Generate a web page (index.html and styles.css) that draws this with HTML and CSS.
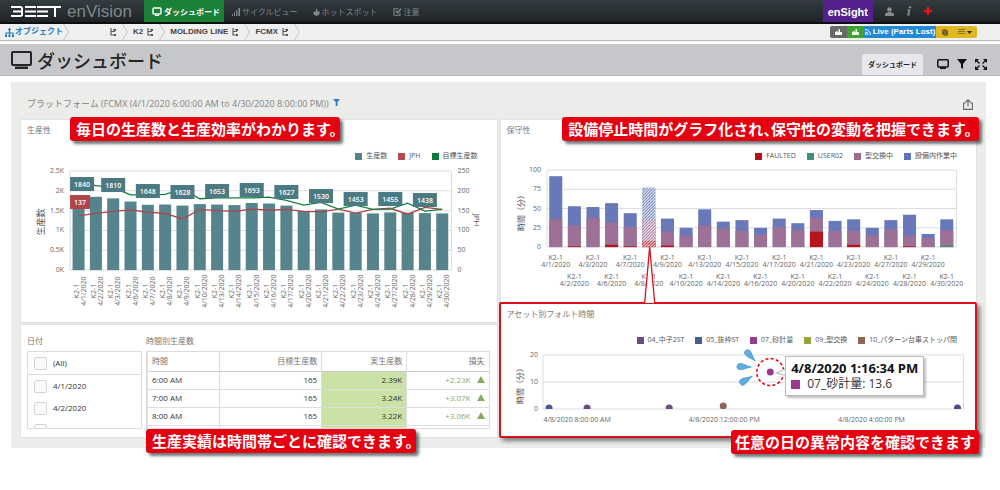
FILE: index.html
```html
<!DOCTYPE html>
<html lang="ja">
<head>
<meta charset="utf-8">
<title>ダッシュボード - enVision</title>
<link rel="stylesheet" href="styles.css">
</head>
<body>
<header class="topbar">
  <svg class="logo" width="50" height="11" viewBox="0 0 50 11" role="img" aria-label="BEET" fill="#fff">
    <path d="M0 0H10L12 1.5V9.5L10 11H0V9H10V6.5H2V4.5H10V2H0ZM14 0H25V2H14ZM14 4.5H25V6.5H14ZM14 9H25V11H14ZM26 0H37V2H26ZM26 4.5H37V6.5H26ZM26 9H37V11H26ZM37 0H50V2H45V11H43V2H37Z"/>
  </svg>
  <span class="product">enVision</span>
  <nav class="nav">
    <a class="nav-item active" href="#">
      <svg width="10" height="9" viewBox="0 0 10 9"><rect x="1" y="1" width="8" height="6" rx="1" fill="none" stroke="#fff" stroke-width="1.4"/><path d="M3 8h4v1H3z" fill="#fff"/></svg>ダッシュボード</a>
    <a class="nav-item" href="#">
      <svg width="8" height="8" viewBox="0 0 8 8" fill="currentColor"><path d="M0 6h1v2H0zM2 4h1v4H2zM4 2h1.3v6H4zM6.3 0H8v8H6.300z"/></svg>サイクルビュー</a>
    <a class="nav-item" href="#">
      <svg width="7" height="8" viewBox="0 0 7 8" fill="currentColor"><path d="M3 0C5 2 4 3 5 3.500C6 3 6 3 6.200 2.800C7 5 7 7 3.500 8C0 7 0 5 .8 3.500L2 4C3 3 3 2 3 0Z"/></svg>ホットスポット</a>
    <a class="nav-item" href="#">
      <svg width="9" height="8" viewBox="0 0 9 8" fill="none" stroke="currentColor"><path d="M5.500 .7H1v6.600h6V4.500" stroke-width="1.100"/><path d="M3 3l1.500 1.800L8 .7" stroke-width="1.400"/></svg>注意</a>
  </nav>
  <div class="top-tools">
    <a class="ensight" href="#">enSight</a>
    <button class="icon-btn" aria-label="ユーザー"><svg width="9" height="9" viewBox="0 0 9 9" fill="#868a8c"><circle cx="4.500" cy="2.500" r="2.300"/><path d="M0 9V7.500C0 6 2 5.500 3.500 5H5.500C7 5.500 9 6 9 7.500V9Z"/></svg></button>
    <button class="icon-btn" aria-label="情報"><svg width="6" height="10" viewBox="0 0 6 10" fill="#868a8c"><circle cx="4" cy="1.200" r="1.200"/><path d="M1 3.500H4.500L3.200 8.500H4.200V9.500H1L2.300 4.500H1Z"/></svg></button>
    <button class="icon-btn" aria-label="追加"><svg width="8" height="8" viewBox="0 0 8 8" fill="#e8141e"><path d="M2.800 0H5.200V2.800H8V5.200H5.200V8H2.800V5.200H0V2.800H2.800Z"/></svg></button>
  </div>
</header>

<svg class="defs" width="0" height="0" aria-hidden="true">
  <symbol id="tree" viewBox="0 0 6 9"><path d="M1 0V7H5.500M1 3.500H5M3 1.500H5" fill="none" stroke="#555" stroke-width="1.100"/><path d="M4 1h2v2H4zM4 6h2v2H4z" fill="#555"/></symbol>
  <symbol id="chev" viewBox="0 0 6 16"><path d="M.5 0L5.500 8L.5 16" fill="none" stroke="#c6c6c6"/></symbol>
  <symbol id="org" viewBox="0 0 9 9"><path d="M4.500 0V8M1 8V5H8V8M3 1.500H6" fill="none" stroke="#1c7ec2" stroke-width="1.200"/><path d="M0 7h2v2H0zM3.500 7h2v2h-2zM7 7h2v2H7z" fill="#1c7ec2"/></symbol>
  <symbol id="bars" viewBox="0 0 7 6"><path d="M0 3h7v3H0zM1 2h1.500v2H1zM3.500 0H5v4H3.500z" fill="#f2f2f2"/></symbol>
</svg>

<div class="crumbs">
  <nav class="path">
    <a class="crumb root" href="#"><svg width="9" height="9"><use href="#org"/></svg>オブジェクト</a>
    <svg class="chev" width="6" height="16"><use href="#chev"/></svg>
    <a class="crumb blank" href="#" aria-label="工場"><svg width="6" height="9"><use href="#tree"/></svg></a>
    <svg class="chev" width="6" height="16"><use href="#chev"/></svg>
    <a class="crumb" href="#">K2 <svg width="6" height="9"><use href="#tree"/></svg></a>
    <svg class="chev" width="6" height="16"><use href="#chev"/></svg>
    <a class="crumb" href="#">MOLDING LINE <svg width="6" height="9"><use href="#tree"/></svg></a>
    <svg class="chev" width="6" height="16"><use href="#chev"/></svg>
    <a class="crumb" href="#">FCMX <svg width="6" height="9"><use href="#tree"/></svg></a>
    <svg class="chev" width="6" height="16"><use href="#chev"/></svg>
  </nav>
  <div class="btn-group">
    <button class="b-gray" aria-label="グラフ"><svg width="7" height="6"><use href="#bars"/></svg></button>
    <button class="b-green" aria-label="稼働グラフ"><svg width="7" height="6"><use href="#bars"/></svg></button>
    <button class="b-blue"><svg width="6" height="6" viewBox="0 0 6 6" fill="none" stroke="#fff"><path d="M0 .5A5.500 5.500 0 0 1 5.500 6M0 3A3 3 0 0 1 3 6"/><circle cx=".8" cy="5.200" r=".5"/></svg>Live (Parts Lost)</button>
    <button class="b-yellow" aria-label="記録"><svg width="6" height="7" viewBox="0 0 6 7"><path d="M0 1L3 0L6 2V6L3 7L0 5Z" fill="#6c5a16"/><path d="M1 2L3 3V6" fill="none" stroke="#c9a52a" stroke-width=".6"/></svg></button>
    <button class="b-yellow wide" aria-label="一覧"><svg width="14" height="6" viewBox="0 0 14 6"><path d="M0 .5h7M0 2.500h7M0 4.500h7" stroke="#8d7415"/><path d="M9 2h5L11.500 5z" fill="#222"/></svg></button>
  </div>
</div>

<div class="titlebar">
  <svg width="21" height="18" viewBox="0 0 21 18"><rect x="1" y="1" width="19" height="13" rx="1" fill="none" stroke="#252525" stroke-width="2"/><path d="M4 15.500h13v2.500H4z" fill="#252525"/></svg>
  <h1>ダッシュボード</h1>
  <a class="tab" href="#">ダッシュボード</a>
  <div class="view-tools">
    <button class="icon-btn" aria-label="画面"><svg width="12" height="10" viewBox="0 0 12 10"><rect x=".8" y=".8" width="10.400" height="7.200" rx="1" fill="none" stroke="#111" stroke-width="1.500"/><path d="M3 8.500h6V10H3z" fill="#111"/></svg></button>
    <button class="icon-btn" aria-label="フィルター"><svg width="10" height="10" viewBox="0 0 10 10"><path d="M0 0H10L6 5V10L4 8.500V5Z" fill="#111"/></svg></button>
    <button class="icon-btn" aria-label="全画面"><svg width="12" height="11" viewBox="0 0 12 11"><path d="M0 0H4L0 4ZM12 0V4L8 0ZM0 11V7L4 11ZM12 11H8L12 7Z" fill="#111"/><path d="M1 1L4.500 4.500M11 1L7.500 4.500M1 10L4.500 6.500M11 10L7.500 6.500" stroke="#111" stroke-width="1.400"/></svg></button>
  </div>
</div>

<main class="board">
  <div class="board-head">
    <h2>プラットフォーム (FCMX (4/1/2020 6:00:00 AM to 4/30/2020 8:00:00 PM))</h2>
    <svg class="funnel" width="7" height="7" viewBox="0 0 7 7"><path d="M0 0H7L4.500 3V7H2.700V3Z" fill="#3079d0"/></svg>
    <button class="icon-btn share" aria-label="共有"><svg width="10" height="11" viewBox="0 0 10 11" fill="none" stroke="#666" stroke-width="1.100"><path d="M3 4H.6V10.400H9.400V4H7M5 7.500V1M2.800 3L5 .8L7.200 3"/></svg></button>
  </div>

  <div class="columns">
    <div class="col">
      <section class="card">
        <h3>生産性</h3>
        <ul class="legend">
          <li><i class="sw teal"></i>生産数</li>
          <li><i class="sw rose"></i>JPH</li>
          <li><i class="sw green"></i>目標生産数</li>
        </ul>
        <svg class="chart" id="output-chart" viewBox="0 0 475 160"></svg>
        <p class="callout c-output">毎日の生産数と生産効率がわかります。</p>
      </section>

      <section class="card hourly">
        <div class="dates">
          <h3>日付</h3>
          <div class="datelist">
            <label class="all"><input type="checkbox">(All)</label>
            <label><input type="checkbox">4/1/2020</label>
            <label><input type="checkbox">4/2/2020</label>
            <label><input type="checkbox">4/3/2020</label>
          </div>
        </div>
        <div class="hours">
          <h3>時間別生産数</h3>
          <div class="tablebox">
            <table>
              <thead><tr><th>時間</th><th>目標生産数</th><th>実生産数</th><th>損失</th></tr></thead>
              <tbody>
                <tr><td>6:00 AM</td><td>165</td><td>2.39K</td><td>+2.23K<i class="up"></i></td></tr>
                <tr><td>7:00 AM</td><td>165</td><td>3.24K</td><td>+3.07K<i class="up"></i></td></tr>
                <tr><td>8:00 AM</td><td>165</td><td>3.22K</td><td>+3.06K<i class="up"></i></td></tr>
                <tr><td></td><td></td><td></td><td></td></tr>
              </tbody>
            </table>
          </div>
        </div>
        <p class="callout c-hourly">生産実績は時間帯ごとに確認できます。</p>
      </section>
    </div>

    <div class="col right">
      <section class="card">
        <h3>保守性</h3>
        <ul class="legend">
          <li><i class="sw red"></i>FAULTED</li>
          <li><i class="sw mint"></i>USER02</li>
          <li><i class="sw mauve"></i>型交換中</li>
          <li><i class="sw blue"></i>設備内作業中</li>
        </ul>
        <svg class="chart" id="downtime-chart" viewBox="0 0 475 140"></svg>
        <p class="callout c-downtime">設備停止時間がグラフ化され、保守性の変動を把握できます。</p>
      </section>

      <section class="card fault">
        <svg class="pointer" viewBox="0 0 474 58"><path d="M143.500 57L148.500 1L153.500 57" fill="#fff" stroke="#d7101c" stroke-width="1.300"/></svg>
        <h3>アセット別フォルト時間</h3>
        <ul class="legend">
          <li><i class="sw plum"></i>04_中子2ST</li>
          <li><i class="sw navy"></i>05_抜枠ST</li>
          <li><i class="sw purple"></i>07_砂計量</li>
          <li><i class="sw olive"></i>09_型交換</li>
          <li><i class="sw brown"></i>10_パターン台車ストッパ閉</li>
        </ul>
        <svg class="chart" id="fault-chart" viewBox="0 0 474 90"></svg>
        <div class="tip"><b>4/8/2020 1:16:34 PM</b><span><i class="sw purple"></i>07_砂計量: 13.6</span></div>
        <p class="callout c-fault">任意の日の異常内容を確認できます</p>
      </section>
    </div>
  </div>
</main>
<script src="charts.js"></script>
</body>
</html>
```
FILE: styles.css
```css
* { box-sizing: border-box; }
html { min-height: 100%; background: #fff; }
body {
  margin: 0;
  min-height: 100vh;
  background: #fff;
  color: #555;
  font: 8px/12px "Open Sans", "Noto Sans CJK JP", sans-serif;
}
h1, h2, h3, p, ul { margin: 0; padding: 0; }
a { color: inherit; text-decoration: none; }
button { font: inherit; border: 0; padding: 0; cursor: pointer; }
svg { display: block; flex: none; }
.defs { position: absolute; }
.icon-btn { background: none; display: flex; align-items: center; }

/* top bar */
.topbar {
  display: flex;
  align-items: center;
  height: 24px;
  padding-left: 11px;
  background: linear-gradient(#343d41, #1e2326);
  border-bottom: 2px solid #0c0e0f;
}
.product {
  margin-left: 6px;
  padding-top: 2px;
  width: 77px;
  font: 17px/22px "Liberation Sans", sans-serif;
  color: #7d868b;
}
.nav { display: flex; align-self: stretch; }
.nav-item {
  display: flex;
  align-items: center;
  gap: 2px;
  padding: 1px 7px 0 8px;
  color: #7e878b;
  font: 8px/12px "Noto Sans CJK JP", sans-serif;
}
.nav-item.active { background: #1b8038; color: #fff; font-weight: 700; padding: 1px 4px 0 8px; }
.top-tools {
  display: flex;
  align-items: center;
  align-self: stretch;
  gap: 12px;
  margin-left: auto;
  padding-right: 68px;
}
.ensight {
  align-self: stretch;
  padding: 0 5px;
  background: #54208b;
  color: #fff;
  font: bold 11px/24px "Liberation Sans", sans-serif;
}

/* breadcrumbs */
.crumbs {
  display: flex;
  align-items: center;
  justify-content: space-between;
  height: 16px;
  padding-right: 23px;
  background: #efefef;
  box-shadow: 0 1px 1px #bbb;
}
.path { display: flex; align-items: center; padding-left: 5px; }
.crumb {
  display: flex;
  align-items: center;
  gap: 4px;
  padding: 0 6px 0 5px;
  color: #444;
  font: bold 8px/16px "Liberation Sans", "Noto Sans CJK JP", sans-serif;
}
.crumb.root { padding: 0; gap: 1px; color: #1c7ec2; }
.crumb.blank { padding-left: 41px; }
.btn-group {
  display: flex;
  height: 12px;
  border-radius: 2px;
  overflow: hidden;
}
.btn-group button {
  display: flex;
  align-items: center;
  justify-content: center;
  gap: 2px;
  width: 17px;
  font: bold 8px/12px "Liberation Sans", sans-serif;
  color: #fff;
}
.btn-group .b-gray { background: #67696b; }
.btn-group .b-green { background: #3fa32f; }
.btn-group .b-blue { background: #2489d3; width: 72px; white-space: nowrap; }
.btn-group .b-yellow { background: #dfb721; }
.btn-group .wide { width: 24px; }

/* title strip */
.titlebar {
  display: flex;
  align-items: center;
  gap: 5px;
  height: 32px;
  margin-top: 4px;
  padding: 0 13px 0 11px;
  background: #c6c7cb;
  border-bottom: 1px solid #b9b9c0;
}
h1 {
  font: 500 18px/30px "Noto Sans CJK JP", sans-serif;
  color: #252525;
}
.tab {
  align-self: flex-end;
  margin-left: auto;
  padding: 0 6px;
  background: #e7e7ed;
  border-radius: 2px 2px 0 0;
  color: #222;
  font: bold 7px/21px "Noto Sans CJK JP", sans-serif;
}
.view-tools { display: flex; gap: 8px; padding: 9px 0 0 9px; }

/* dashboard */
.board {
  margin: 6px 14px 0 11px;
  padding: 0 10px 10px;
  background: #ececea;
}
.board-head { display: flex; align-items: center; height: 38px; padding: 6px 3px 0 6px; }
h2 { font-size: 9px; line-height: 16px; font-weight: 400; color: #858585; }
.funnel { margin: 0 0 4px 4px; }
.share { margin-left: auto; }
.columns { display: grid; grid-template-columns: 1fr 1fr; gap: 4px; }
.col { display: flex; flex-direction: column; gap: 3px; min-width: 0; }
.col.right { gap: 0; }
.card {
  position: relative;
  padding-top: 4px;
  background: #fff;
  box-shadow: 0 0 2px #ccc;
}
h3 { padding-left: 6px; font-size: 8px; line-height: 12px; font-weight: 400; color: #777; }
.legend {
  display: flex;
  justify-content: flex-end;
  gap: 11px;
  margin-top: 14px;
  padding-right: 19px;
  list-style: none;
  font-size: 7px;
  line-height: 12px;
  color: #555;
  white-space: nowrap;
}
.legend li { display: flex; align-items: center; gap: 4px; }
.sw { display: block; width: 7px; height: 7px; }
.teal { background: #55848c; }
.rose { background: #b24a50; }
.green { background: #0d7a3c; }
.red { background: #b5121b; }
.mint { background: #3f9271; }
.mauve { background: #9c6b93; }
.blue { background: #6073b8; }
.plum { background: #6c4c80; }
.navy { background: #485c91; }
.purple { background: #983c8e; }
.olive { background: #97a53c; }
.brown { background: #8d6550; }

.chart { width: 100%; height: auto; font-size: 7px; fill: #666; }
.chart .axis { font-size: 8px; fill: #555; }
.chart .axis.big { font-size: 9px; }
.chart .grid { stroke: #dedede; fill: none; }
.chart .badge { fill: #fff; font-weight: 600; }

/* hourly output */
.hourly { display: flex; gap: 4px; height: 112px; padding: 10px 7px 0 6px; }
.hourly h3 { padding-left: 0; }
.dates { flex: 0 0 115px; }
.hours { flex: 1; min-width: 0; }
.datelist { margin-top: 4px; height: 78px; overflow: hidden; border: 1px solid #ddd; }
.datelist label {
  display: flex;
  align-items: center;
  gap: 6px;
  height: 22px;
  padding-left: 6px;
  color: #333;
}
.datelist .all { height: 23px; border-bottom: 1px solid #ddd; }
.datelist input {
  appearance: none;
  width: 13px;
  height: 13px;
  margin: 0;
  border: 1px solid #d4d4d4;
  border-radius: 2px;
  background: #fafafa;
}
.tablebox { margin-top: 4px; height: 78px; overflow: hidden; border: 1px solid #ddd; border-left-width: 2px; }
table { width: 100%; border-collapse: collapse; table-layout: fixed; }
th, td {
  height: 18px;
  padding: 0 4px;
  border-right: 1px solid #ddd;
  border-bottom: 1px solid #ddd;
  text-align: right;
  font-weight: 400;
  line-height: 12px;
}
th { height: 19px; color: #777; border-bottom: 1px solid #ccc; }
td { color: #333; }
th:first-child, td:first-child { width: 21%; text-align: left; }
th:nth-child(2) { width: 30%; }
th:nth-child(3) { width: 25%; }
th:last-child, td:last-child { border-right: 0; }
td:nth-child(3) { background: #cae2a5; }
td:last-child { color: #86aa72; }
.up {
  display: inline-block;
  margin-left: 6px;
  border: 4px solid transparent;
  border-top: 0;
  border-bottom: 7px solid #86aa62;
}

/* fault detail */
.fault {
  margin: 0 -1px 0 -2px;
  border: 2px solid #d7101c;
  border-radius: 2px;
  box-shadow: 3px 3px 4px rgba(40, 50, 50, .6);
  height: 136px;
}
.fault .legend { padding-right: 18px; }
.pointer { position: absolute; left: 0; bottom: 100%; width: 100%; }
.tip {
  position: absolute;
  left: 60%;
  top: 52px;
  padding: 3px 5px;
  background: #fff;
  border: 1px solid #bbb;
  box-shadow: 2px 2px 2px rgba(0, 0, 0, .25);
  color: #333;
  font-size: 12px;
  line-height: 16px;
  white-space: nowrap;
}
.tip b { display: block; color: #111; font-size: 13px; }
.tip span { display: flex; align-items: center; gap: 7px; }
.tip .sw { width: 9px; height: 9px; }

/* callouts lie over the cards */
.callout {
  position: absolute;
  z-index: 2;
  padding: 0 3px 0 6px;
  border-radius: 3px;
  background: #e50012;
  color: #fff;
  box-shadow: 3px 3px 3px rgba(30, 50, 50, .65);
  font: 700 15px/24px "Noto Sans CJK JP", sans-serif;
  font-feature-settings: "halt";
  white-space: nowrap;
}
.c-output { left: 49px; top: -3px; }
.c-hourly { left: 125px; bottom: -16px; }
.c-downtime { right: -3px; top: -3px; padding-right: 7px; }
.c-fault { right: -4px; bottom: -18px; padding: 0 4px; }
```
FILE: charts.js
```js
const days = [1, 2, 3, 6, 7, 8, 9, 10, 13, 14, 15, 16, 17, 20, 21, 22, 23, 24, 27, 28, 29, 30];
const text = (x, y, s, anchor = 'middle', cls = '', rot = 0) =>
  `<text class="${cls}" text-anchor="${anchor}" transform="translate(${x} ${y}) rotate(${rot})">${s}</text>`;
const rect = (x, y, w, h, fill) => `<rect x="${x}" y="${y}" width="${w}" height="${h}" fill="${fill}"/>`;
const line = (x1, y1, x2, y2) => `<path class="grid" d="M${x1} ${y1}L${x2} ${y2}"/>`;

function drawOutput() {
  const output = [1840, 1850, 1810, 1730, 1648, 1655, 1628, 1665, 1653, 1640, 1693, 1680, 1627, 1490, 1530, 1450, 1453, 1430, 1455, 1450, 1438, 1430];
  const jph = [137, 143, 148, 152, 146, 143, 129, 153, 150, 148, 154, 151, 153, 148, 147, 154, 144, 153, 156, 141, 158, 153];
  const target = [220, 213, 208, 190, 190, 191, 205, 180, 182, 182, 182, 184, 176, 164, 171, 154, 164, 153, 154, 169, 149, 153];
  const left = 49, right = 430, base = 108, h = 99;
  const cx = i => 57.5 + 17.3 * i;
  let s = '';
  for (let k = 0; k <= 5; k++) {
    const y = base - h * k / 5;
    s += line(left, y, right, y);
    s += text(left - 6, y + 2, ['0K', '0.5K', '1K', '1.5K', '2K', '2.5K'][k], 'end');
    s += text(right + 6, y + 2, k * 50, 'start');
  }
  s += line(left, base - h, left, base) + line(right, base - h, right, base);
  output.forEach((v, i) => {
    const bh = h * v / 2500;
    s += rect(cx(i) - 6, base - bh, 12, bh, '#55848c');
    s += text(cx(i), 129, 'K2-1', 'middle', '', -90) + text(cx(i) + 7, 129, `4/${days[i]}/2020`, 'middle', '', -90);
  });
  const poly = (vals, c) => `<polyline fill="none" stroke="${c}" stroke-width="1.3" points="${vals.map((v, i) => cx(i) + ',' + (base - h * v / 250)).join(' ')}"/>`;
  s += poly(jph, '#b0444b') + poly(target, '#12813f');
  const tagY = [22, 23, 29, 30, 29, 28, 30, 34, 37, 37, 38];
  tagY.forEach((y, k) => {
    const x = k ? cx(2 * k) : 61;
    s += rect(x - 12, y - 7, 24, 14, '#4b7a82') + text(x, y + 3, output[2 * k], 'middle', 'badge');
  });
  s += rect(49, 33, 20, 14, '#b0444b') + text(59, 43, '137', 'middle', 'badge');
  s += text(23, 60, '生産数', 'middle', 'axis big', -90);
  s += text(453, 58, 'JPH', 'middle', 'axis', 90);
  document.getElementById('output-chart').innerHTML = s;
}

function drawDowntime() {
  const total = [92, 53, 52, 57, 44, 77, 37, 25, 49, 33, 35, 25, 37, 31, 48, 34, 36, 25, 35, 42, 17, 36];
  const swap = [36, 28, 38, 32, 26, 36, 20, 15, 28, 24, 21, 16, 26, 22, 38, 21, 21, 15, 23, 15, 12, 22];
  const fault = [0, 1, 0, 3, 1, 8, 2, 0, 0, 0, 0, 0, 0, 0, 20, 0, 3, 0, 0, 1, 0, 0];
  const left = 46, right = 455, base = 85, h = 77;
  const cx = i => 54.7 + 18.6 * i;
  let s = '<defs><pattern id="hatch" width="3" height="3" patternUnits="userSpaceOnUse"><path d="M-1 1L1 -1M0 3L3 0M2 4L4 2" stroke="#fff" stroke-width="1"/></pattern></defs>';
  for (let k = 0; k <= 4; k++) {
    const y = base - h * k / 4;
    s += line(left, y, right, y) + text(left - 6, y + 2, k * 25, 'end');
  }
  s += line(left, base - h, left, base) + line(right, base - h, right, base);
  total.forEach((v, i) => {
    const bar = (n, c) => rect(cx(i) - 6.5, base - h * n / 100, 13, h * n / 100, c);
    s += bar(v, '#6878b9') + bar(swap[i], '#9f7096') + bar(fault[i], '#b8141c');
    if (i === 21) s += bar(2, '#3f9271');
    if (i === 5) s += bar(v, 'url(#hatch)');
    const y = i % 2 ? 117 : 98;
    s += text(cx(i), y, 'K2-1') + text(cx(i), y + 7, `4/${days[i]}/2020`);
  });
  s += text(23, 49, '時間（分）', 'middle', 'axis', -90);
  document.getElementById('downtime-chart').innerHTML = s;
}

function drawFaults() {
  const left = 42, right = 462, base = 63;
  let s = '<defs><clipPath id="plot"><rect width="474" height="63"/></clipPath></defs>';
  [0, 10, 20].forEach(v => {
    const y = base - v * 2.7;
    s += line(left, y, right, y) + text(left - 5, y + 2, v, 'end');
  });
  s += line(left, 9, left, base) + line(right, 9, right, base);
  const dot = (x, y, c) => `<circle cx="${x}" cy="${y}" r="3.5" fill="${c}"/>`;
  s += '<g clip-path="url(#plot)">' + dot(48, 62, '#485c91') + dot(86, 62, '#6c4c80') + dot(168, 62, '#6c4c80') +
    dot(222, 60, '#8d6550') + dot(456, 62, '#5b4580') + '</g>';
  s += dot(269, 26, '#983c8e');
  s += '<circle cx="269" cy="26" r="13.500" fill="none" stroke="#e50012" stroke-width="1.500" stroke-dasharray="3 2.300"/>';
  s += '<path d="M286 22L275 27L286 30" fill="#fff" stroke="#bbb"/>';
  const drop = (x, y, r) => `<path transform="translate(${x} ${y}) rotate(${r})" d="M0 0C-5 -.5 -8 -3.500 -12 -3C-15 -2.500 -15 2.500 -12 3C-8 3.500 -5 1 0 0Z" fill="#5eaee0" stroke="#3f8fca" stroke-width=".7"/>`;
  s += drop(254, 15, 47) + drop(250, 21, 2) + drop(251, 30, -32);
  s += text(76, 76, '4/8/2020 8:00:00 AM') + text(223, 76, '4/8/2020 12:00:00 PM') + text(370, 76, '4/8/2020 4:00:00 PM');
  s += text(22, 38, '時間（分）', 'middle', 'axis', -90);
  document.getElementById('fault-chart').innerHTML = s;
}

drawOutput();
drawDowntime();
drawFaults();
```
